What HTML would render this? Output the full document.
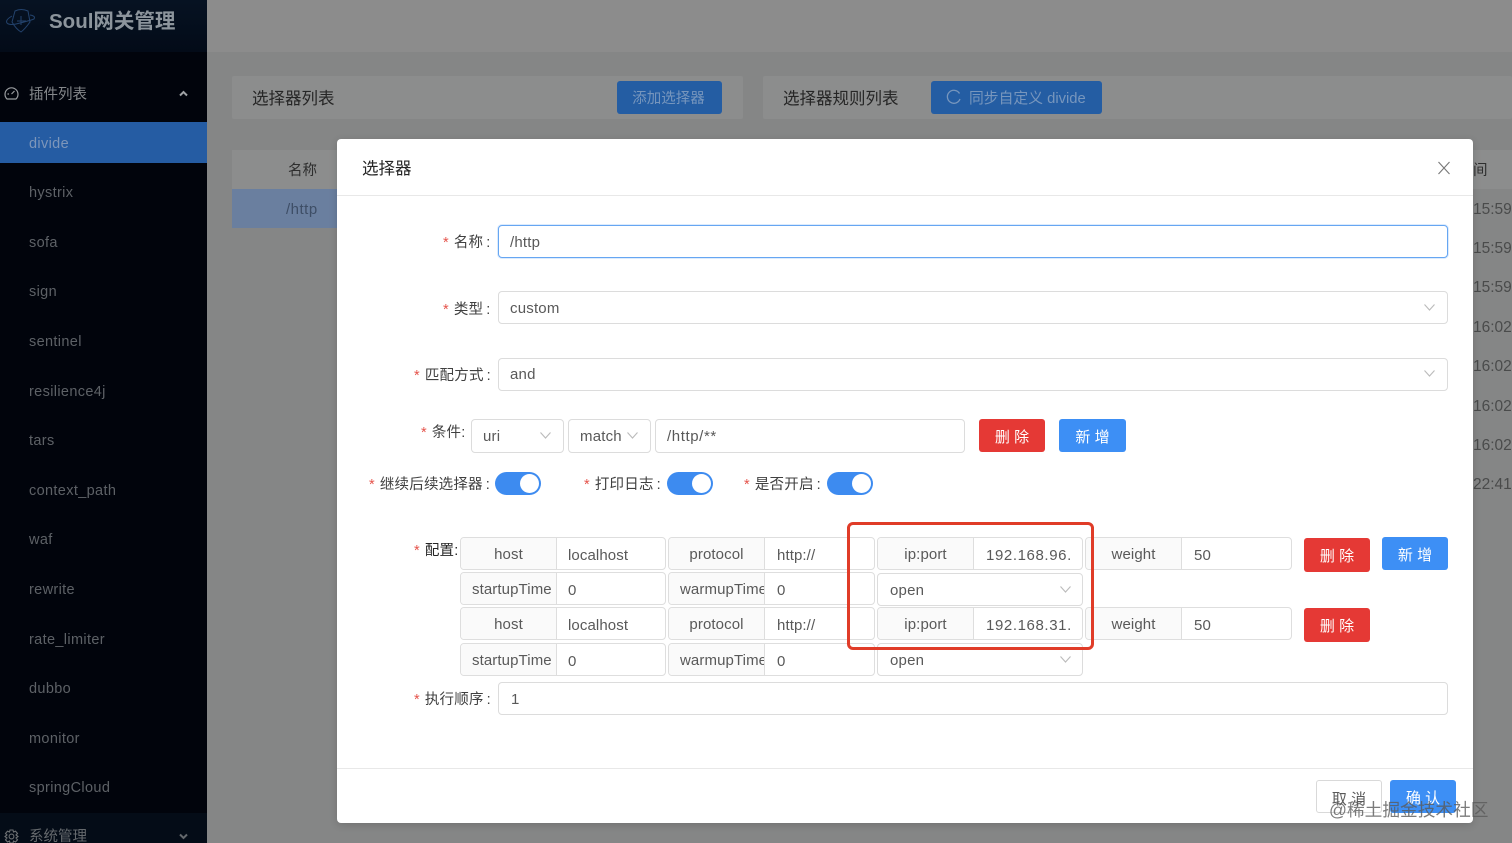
<!DOCTYPE html>
<html lang="zh"><head><meta charset="utf-8"><title>Soul网关管理</title>
<style>
*{box-sizing:border-box;margin:0;padding:0}
html,body{width:1512px;height:843px;overflow:hidden;background:#858686;font-family:"Liberation Sans","Noto Sans CJK SC",sans-serif}
#w{position:absolute;left:0;top:0;width:1512px;height:843px;overflow:hidden;filter:blur(.3px)}
.a{position:absolute;white-space:nowrap}
.side{left:0;top:0;width:207px;height:843px;background:#01040c}
.logo{left:0;top:0;width:207px;height:52px;background:linear-gradient(#061222,#030b18)}
.sub{left:0;top:813px;width:207px;height:30px;background:#040c17}
.m{left:29px;font-size:14.5px;color:#5d6166;line-height:20px;letter-spacing:.35px}
.card{background:#8c8d8d;border-radius:2px}
.input{background:#fff;border:1px solid #dcdcdc;border-radius:4px;font-size:15px;color:#595959;padding-left:11px;letter-spacing:.2px}
.g{background:#fff;border:1px solid #dedede;border-radius:4px;font-size:15px;color:#595959;height:33px;line-height:33px;letter-spacing:.1px;overflow:hidden}
.g b{position:absolute;left:0;top:0;width:96px;height:31px;line-height:33px;padding:0 11px;background:#fafafa;border-right:1px solid #dedede;text-align:center;font-weight:400;overflow:hidden}
.g i{position:absolute;left:108px;top:1px;font-style:normal}
.g i.f{left:107px}
.g i.n{letter-spacing:.6px}
.lab{font-size:14.5px;color:#404040;line-height:20px;letter-spacing:.2px}
.lab s{text-decoration:none;color:#e5534b;margin-right:5px}
.lab u{text-decoration:none;margin-left:3px}
.btn{border-radius:3px;color:#fff;font-size:15px;text-align:center;padding-top:2px;white-space:pre}
.r{background:#e53935}.bl{background:#3d8ff5}
.sw{width:46px;height:23px;border-radius:12px;background:#3d8bf0}
.sw:after{content:"";position:absolute;right:2px;top:2px;width:19px;height:19px;border-radius:50%;background:#fff}
.ch{width:11px;height:7px}
.t{font-size:15.5px;color:#4a4b4b;left:1473px}
</style></head><body><div id="w">
<div class="a side"></div>
<div class="a logo"></div>
<svg class="a" style="left:5px;top:8px" width="32" height="26" viewBox="0 0 32 26" fill="none" stroke="#23426c" stroke-width="1"><path d="M10 3 Q16 0 23 3 L25 14 Q20 21 16 24 Q11 21 7 14Z"/><path d="M7 8 Q0 12 2 15 Q5 18 15 15 Q27 12 29 11 Q31 8 25 7"/><path d="M12 13H21M16 8V17"/></svg>
<div class="a" style="left:49px;top:9px;font-size:20.5px;font-weight:700;color:#8c949c;line-height:26px">Soul网关管理</div>
<svg class="a" style="left:4px;top:86px" width="15" height="15" viewBox="0 0 15 15" fill="none" stroke="#9a9da0" stroke-width="1.2"><path d="M3 13 A6.5 6.5 0 1 1 12 13 Z"/><path d="M7.5 8 L10.5 5M3.5 8H5"/></svg>
<div class="a" style="left:29px;top:85px;font-size:14.5px;color:#85888b;line-height:20px">插件列表</div>
<svg class="a ch" style="left:178px;top:90px" viewBox="0 0 11 7" fill="none" stroke="#a0a3a6" stroke-width="2"><path d="M2 5.5 L5.5 2 L9 5.5"/></svg>
<div class="a" style="left:0;top:122px;width:207px;height:41px;background:#255ca3"></div>
<div class="a m" style="top:134px;color:#7d96ba">divide</div>
<div class="a m" style="top:183px">hystrix</div>
<div class="a m" style="top:233px">sofa</div>
<div class="a m" style="top:282px">sign</div>
<div class="a m" style="top:332px">sentinel</div>
<div class="a m" style="top:382px">resilience4j</div>
<div class="a m" style="top:431px">tars</div>
<div class="a m" style="top:481px">context_path</div>
<div class="a m" style="top:530px">waf</div>
<div class="a m" style="top:580px">rewrite</div>
<div class="a m" style="top:630px">rate_limiter</div>
<div class="a m" style="top:679px">dubbo</div>
<div class="a m" style="top:729px">monitor</div>
<div class="a m" style="top:778px">springCloud</div>
<div class="a sub"></div>
<svg class="a" style="left:4px;top:829px" width="15" height="15" viewBox="0 0 15 15" fill="none" stroke="#6d7073" stroke-width="1.1"><circle cx="7.5" cy="7.5" r="2.4"/><path d="M6 1H9L9.5 3 11.5 2.2 13.5 4.5 12 6 14 7.5 12 9 13.5 10.8 11.5 13 9.5 12 9 14H6L5.5 12 3.5 13 1.5 10.8 3 9 1 7.5 3 6 1.5 4.5 3.5 2.2 5.5 3Z"/></svg>
<div class="a m" style="top:827px;color:#65696d;letter-spacing:0">系统管理</div>
<svg class="a ch" style="left:178px;top:833px" viewBox="0 0 11 7" fill="none" stroke="#64686c" stroke-width="2"><path d="M2 1.5 L5.5 5 L9 1.5"/></svg>

<div class="a" style="left:207px;top:0;width:1305px;height:52px;background:#8c8c8c"></div>
<div class="a card" style="left:232px;top:76px;width:511px;height:43px"></div>
<div class="a" style="left:252px;top:88px;font-size:16.5px;color:#262626;line-height:22px">选择器列表</div>
<div class="a" style="left:617px;top:81px;width:105px;height:33px;background:#245da3;border-radius:3px;color:#7796bd;font-size:14.5px;line-height:33px;text-align:center;padding:2px 2px 0 0">添加选择器</div>
<div class="a card" style="left:763px;top:76px;width:749px;height:43px"></div>
<div class="a" style="left:783px;top:88px;font-size:16.5px;color:#262626;line-height:22px">选择器规则列表</div>
<div class="a" style="left:931px;top:81px;width:171px;height:33px;background:#245da3;border-radius:3px;color:#7796bd;font-size:14.8px;line-height:33px;padding:2px 0 0 38px">同步自定义 divide</div>
<svg class="a" style="left:946px;top:89px" width="16" height="16" viewBox="0 0 16 16" fill="none" stroke="#7796bd" stroke-width="1.3"><path d="M13.5 4.5 A6.5 6.5 0 1 0 14 10"/></svg>
<div class="a" style="left:232px;top:150px;width:105px;height:39px;background:#8c8d8d"></div>
<div class="a" style="left:288px;top:161px;font-size:14.5px;color:#2e2e2e;line-height:20px">名称</div>
<div class="a" style="left:232px;top:189px;width:105px;height:39px;background:#6a7f9f"></div>
<div class="a" style="left:286px;top:200px;font-size:15px;letter-spacing:.5px;color:#3e4e66;line-height:20px">/http</div>
<div class="a" style="left:1473px;top:150px;width:39px;height:39px;background:#8c8d8d"></div>
<div class="a" style="left:1473px;top:161px;font-size:14.5px;color:#2e2e2e;line-height:20px">间</div>
<div class="a t" style="top:201px">15:59</div>
<div class="a t" style="top:240px">15:59</div>
<div class="a t" style="top:279px">15:59</div>
<div class="a t" style="top:319px">16:02</div>
<div class="a t" style="top:358px">16:02</div>
<div class="a t" style="top:398px">16:02</div>
<div class="a t" style="top:437px">16:02</div>
<div class="a t" style="top:476px">22:41</div>

<div class="a" style="left:337px;top:139px;width:1136px;height:684px;background:#fff;border-radius:4px;box-shadow:0 2px 8px rgba(0,0,0,.15)"></div>
<div class="a" style="left:337px;top:195px;width:1136px;height:1px;background:#e8e8e8"></div>
<div class="a" style="left:337px;top:768px;width:1136px;height:1px;background:#e8e8e8"></div>
<div class="a" style="left:362px;top:158px;font-size:16.5px;color:#262626;line-height:22px">选择器</div>
<svg class="a" style="left:1437px;top:161px" width="14" height="14" viewBox="0 0 14 14" stroke="#777" stroke-width="1.1"><path d="M1.5 1 L12.5 13M12.5 1 L1.5 13"/></svg>

<div class="a lab" style="left:443px;top:233px"><s>*</s>名称<u>:</u></div>
<div class="a input" style="left:498px;top:225px;width:950px;height:33px;line-height:33px;border-color:#66a6f2;box-shadow:0 0 0 1px rgba(61,143,245,.18)">/http</div>
<div class="a lab" style="left:443px;top:300px"><s>*</s>类型<u>:</u></div>
<div class="a input" style="left:498px;top:291px;width:950px;height:33px;line-height:33px">custom</div>
<svg class="a ch" style="left:1424px;top:304px" viewBox="0 0 11 7" fill="none" stroke="#bbb" stroke-width="1.1"><path d="M.5 .5 L5.5 6 L10.5 .5"/></svg>
<div class="a lab" style="left:414px;top:366px"><s>*</s>匹配方式<u>:</u></div>
<div class="a input" style="left:498px;top:358px;width:950px;height:33px;line-height:32px">and</div>
<svg class="a ch" style="left:1424px;top:370px" viewBox="0 0 11 7" fill="none" stroke="#bbb" stroke-width="1.1"><path d="M.5 .5 L5.5 6 L10.5 .5"/></svg>

<div class="a lab" style="left:421px;top:423px"><s>*</s>条件:</div>
<div class="a input" style="left:471px;top:419px;width:93px;height:34px;line-height:34px">uri</div>
<svg class="a ch" style="left:540px;top:432px" viewBox="0 0 11 7" fill="none" stroke="#bbb" stroke-width="1.1"><path d="M.5 .5 L5.5 6 L10.5 .5"/></svg>
<div class="a input" style="left:568px;top:419px;width:83px;height:34px;line-height:34px">match</div>
<svg class="a ch" style="left:627px;top:432px" viewBox="0 0 11 7" fill="none" stroke="#bbb" stroke-width="1.1"><path d="M.5 .5 L5.5 6 L10.5 .5"/></svg>
<div class="a input" style="left:655px;top:419px;width:310px;height:34px;line-height:34px;letter-spacing:.6px">/http/**</div>
<div class="a btn r" style="left:979px;top:419px;width:66px;height:33px;line-height:33px">删 除</div>
<div class="a btn bl" style="left:1059px;top:419px;width:67px;height:33px;line-height:33px">新 增</div>

<div class="a lab" style="left:369px;top:475px"><s>*</s>继续后续选择器<u>:</u></div>
<div class="a sw" style="left:495px;top:472px"></div>
<div class="a lab" style="left:584px;top:475px"><s>*</s>打印日志<u>:</u></div>
<div class="a sw" style="left:667px;top:472px"></div>
<div class="a lab" style="left:744px;top:475px"><s>*</s>是否开启<u>:</u></div>
<div class="a sw" style="left:827px;top:472px"></div>

<div class="a lab" style="left:414px;top:541px;color:#262626"><s>*</s>配置:</div>

<div class="a g" style="left:460px;top:537px;width:206px"><b>host</b><i class="f">localhost</i></div>
<div class="a g" style="left:668px;top:537px;width:207px"><b>protocol</b><i>http://</i></div>
<div class="a g" style="left:877px;top:537px;width:206px"><b>ip:port</b><i class="n">192.168.96.</i></div>
<div class="a g" style="left:1085px;top:537px;width:207px"><b>weight</b><i>50</i></div>

<div class="a g" style="left:460px;top:572px;width:206px"><b>startupTime</b><i class="f">0</i></div>
<div class="a g" style="left:668px;top:572px;width:207px"><b>warmupTime</b><i>0</i></div>
<div class="a input" style="left:877px;top:573px;width:206px;height:33px;line-height:33px;padding-left:12px">open</div>
<svg class="a ch" style="left:1060px;top:586px" viewBox="0 0 11 7" fill="none" stroke="#bbb" stroke-width="1.1"><path d="M.5 .5 L5.5 6 L10.5 .5"/></svg>

<div class="a g" style="left:460px;top:607px;width:206px"><b>host</b><i class="f">localhost</i></div>
<div class="a g" style="left:668px;top:607px;width:207px"><b>protocol</b><i>http://</i></div>
<div class="a g" style="left:877px;top:607px;width:206px"><b>ip:port</b><i class="n">192.168.31.</i></div>
<div class="a g" style="left:1085px;top:607px;width:207px"><b>weight</b><i>50</i></div>

<div class="a g" style="left:460px;top:643px;width:206px"><b>startupTime</b><i class="f">0</i></div>
<div class="a g" style="left:668px;top:643px;width:207px"><b>warmupTime</b><i>0</i></div>
<div class="a input" style="left:877px;top:643px;width:206px;height:33px;line-height:33px;padding-left:12px">open</div>
<svg class="a ch" style="left:1060px;top:656px" viewBox="0 0 11 7" fill="none" stroke="#bbb" stroke-width="1.1"><path d="M.5 .5 L5.5 6 L10.5 .5"/></svg>

<div class="a" style="left:847px;top:522px;width:247px;height:128px;border:3px solid #e03c28;border-radius:6px"></div>

<div class="a btn r" style="left:1304px;top:538px;width:66px;height:34px;line-height:34px">删 除</div>
<div class="a btn bl" style="left:1382px;top:537px;width:66px;height:33px;line-height:33px">新 增</div>
<div class="a btn r" style="left:1304px;top:608px;width:66px;height:34px;line-height:34px">删 除</div>

<div class="a lab" style="left:414px;top:690px"><s>*</s>执行顺序<u>:</u></div>
<div class="a input" style="left:498px;top:682px;width:950px;height:33px;line-height:33px;padding-left:12px">1</div>

<div class="a btn" style="left:1316px;top:780px;width:66px;height:33px;line-height:33px;background:#fff;border:1px solid #d9d9d9;color:#595959">取 消</div>
<div class="a btn bl" style="left:1390px;top:780px;width:66px;height:33px;line-height:33px">确 认</div>
<div class="a" style="left:1329px;top:799px;font-size:17.7px;line-height:22px;color:rgba(90,90,90,.8)">@稀土掘金技术社区</div>
</div></body></html>
